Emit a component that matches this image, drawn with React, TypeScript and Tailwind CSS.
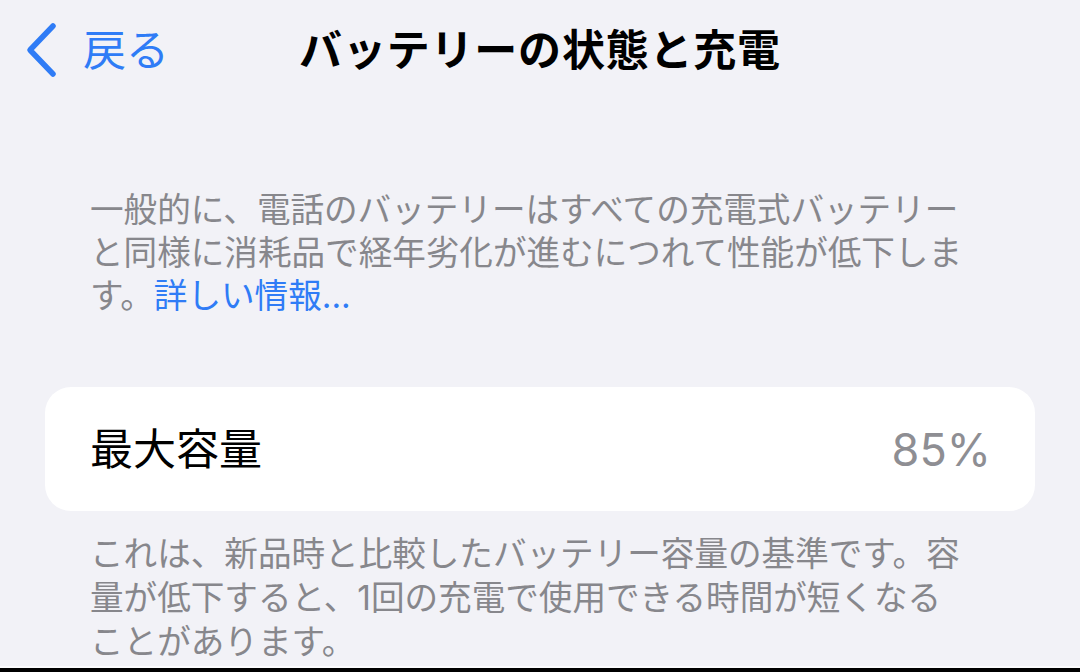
const jp = "font-['Inter','Noto_Sans_CJK_JP',sans-serif]";

const BackChevron = () => (
	<svg width="34" height="56" viewBox="0 0 34 56" fill="none" className="shrink-0">
		<path
			d="M29 4 L6 28 L29 52"
			stroke="#2f7cf6"
			strokeWidth="5.5"
			strokeLinecap="round"
			strokeLinejoin="round"
		/>
	</svg>
);

export default function App() {
	return (
		<div className={`${jp} w-[1080px] h-[672px] bg-[#f2f2f7] flex flex-col overflow-hidden`}>
			<header className="grid grid-cols-[1fr_auto_1fr] items-center h-[100px]">
				<div className="flex items-center gap-[25px] pl-[24px]">
					<BackChevron />
					<span className="text-[43px] leading-none text-[#2f7cf6]">戻る</span>
				</div>
				<h1 className="text-[43px] leading-none font-bold text-black tracking-[0.8px]">
					バッテリーの状態と充電
				</h1>
				<div />
			</header>

			<main className="flex-1 flex flex-col">
				<p className="mt-[88px] px-[90px] text-[33.6px] leading-[43px] text-[#87878c]">
					一般的に、電話のバッテリーはすべての充電式バッテリーと同様に消耗品で経年劣化が進むにつれて性能が低下します。
					<span className="text-[#2f7cf6]">詳しい情報...</span>
				</p>

				<section className="mt-[70px] mx-[45px] h-[124px] bg-white rounded-[26px] flex items-center justify-between pl-[45px] pr-[44px]">
					<span className="text-[43px] leading-none text-black">最大容量</span>
					<span className="text-[45px] leading-none text-[#8e8e93]">85%</span>
				</section>

				<p className="mt-[21px] px-[90px] text-[33.6px] leading-[44px] text-[#87878c]">
					これは、新品時と比較したバッテリー容量の基準です。容量が低下すると、1回の充電で使用できる時間が短くなる
					<br />
					ことがあります。
				</p>
			</main>

			<div className="h-[2px] bg-[#fbfbfd]" />
			<div className="h-[4px] bg-black" />
		</div>
	);
}
